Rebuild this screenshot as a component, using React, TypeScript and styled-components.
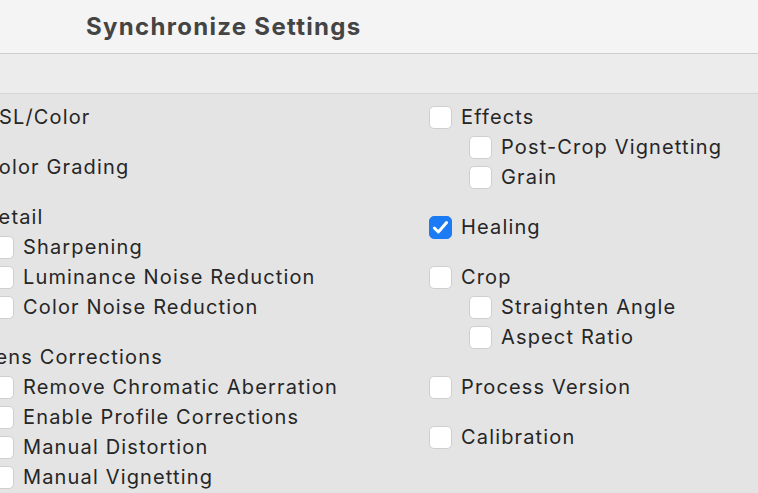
import React from "react";
import styled, { createGlobalStyle } from "styled-components";

const GlobalStyle = createGlobalStyle`
  html, body {
    margin: 0;
    padding: 0;
    background: #e4e4e4;
    overflow: hidden;
  }
  body {
    font-family: Inter, "Liberation Sans", Arial, sans-serif;
    -webkit-font-smoothing: antialiased;
  }
`;

// 전체 다이얼로그
const Dialog = styled.div`
  width: 758px;
  height: 493px;
  display: flex;
  flex-direction: column;
  background: #e4e4e4;
  overflow: hidden;
`;

// 타이틀 바
const TitleBar = styled.div`
  height: 54px;
  flex-shrink: 0;
  display: flex;
  align-items: center;
  padding-left: 86px;
  background: #f4f4f4;
  border-bottom: 1px solid #cdcdcd;
  box-sizing: border-box;
`;

const Title = styled.h1`
  margin: 0;
  font-size: 24px;
  font-weight: 700;
  letter-spacing: 1.3px;
  color: #444444;
`;

// 타이틀 아래 띠
const Band = styled.div`
  height: 40px;
  flex-shrink: 0;
  background: #ececec;
  border-bottom: 1px solid #d6d6d6;
  box-sizing: border-box;
`;

// 두 칼럼 영역
const Columns = styled.div`
  display: grid;
  grid-template-columns: 478px 1fr;
  margin-left: -49px;
  padding-top: 8px;
`;

const Column = styled.div`
  display: flex;
  flex-direction: column;
`;

const Group = styled.div`
  display: flex;
  flex-direction: column;
  margin-bottom: 20px;
`;

const Row = styled.label<{ $indent?: boolean }>`
  height: 30px;
  display: flex;
  align-items: center;
  gap: 9px;
  padding-left: ${(p) => (p.$indent ? "40px" : "0")};
  font-size: 20px;
  letter-spacing: 1.15px;
  color: #262626;
  white-space: nowrap;
`;

const Box = styled.span<{ $checked?: boolean }>`
  width: 23px;
  height: 23px;
  box-sizing: border-box;
  border-radius: 5px;
  flex-shrink: 0;
  display: flex;
  align-items: center;
  justify-content: center;
  background: ${(p) => (p.$checked ? "#1a7bf4" : "#ffffff")};
  border: 1px solid ${(p) => (p.$checked ? "#1a7bf4" : "#cfcfcf")};
`;

type Item = { label: string; checked?: boolean; children?: string[] };

const leftGroups: Item[] = [
  { label: "HSL/Color" },
  { label: "Color Grading" },
  {
    label: "Detail",
    children: ["Sharpening", "Luminance Noise Reduction", "Color Noise Reduction"],
  },
  {
    label: "Lens Corrections",
    children: [
      "Remove Chromatic Aberration",
      "Enable Profile Corrections",
      "Manual Distortion",
      "Manual Vignetting",
    ],
  },
];

const rightGroups: Item[] = [
  { label: "Effects", children: ["Post-Crop Vignetting", "Grain"] },
  { label: "Healing", checked: true },
  { label: "Crop", children: ["Straighten Angle", "Aspect Ratio"] },
  { label: "Process Version" },
  { label: "Calibration" },
];

function Check({ checked }: { checked?: boolean }) {
  return (
    <Box $checked={checked}>
      {checked && (
        <svg width="17" height="15" viewBox="0 0 17 15">
          <path
            d="M2.4 8 L6.4 12 L14.6 2.6"
            fill="none"
            stroke="#fff"
            strokeWidth="3"
            strokeLinecap="round"
            strokeLinejoin="round"
          />
        </svg>
      )}
    </Box>
  );
}

function GroupList({ items }: { items: Item[] }) {
  return (
    <Column>
      {items.map((g) => (
        <Group key={g.label}>
          <Row>
            <Check checked={g.checked} />
            {g.label}
          </Row>
          {g.children?.map((c) => (
            <Row key={c} $indent>
              <Check />
              {c}
            </Row>
          ))}
        </Group>
      ))}
    </Column>
  );
}

export default function App() {
  return (
    <>
      <GlobalStyle />
      <Dialog>
        <TitleBar>
          <Title>Synchronize Settings</Title>
        </TitleBar>
        <Band />
        <Columns>
          <GroupList items={leftGroups} />
          <GroupList items={rightGroups} />
        </Columns>
      </Dialog>
    </>
  );
}
